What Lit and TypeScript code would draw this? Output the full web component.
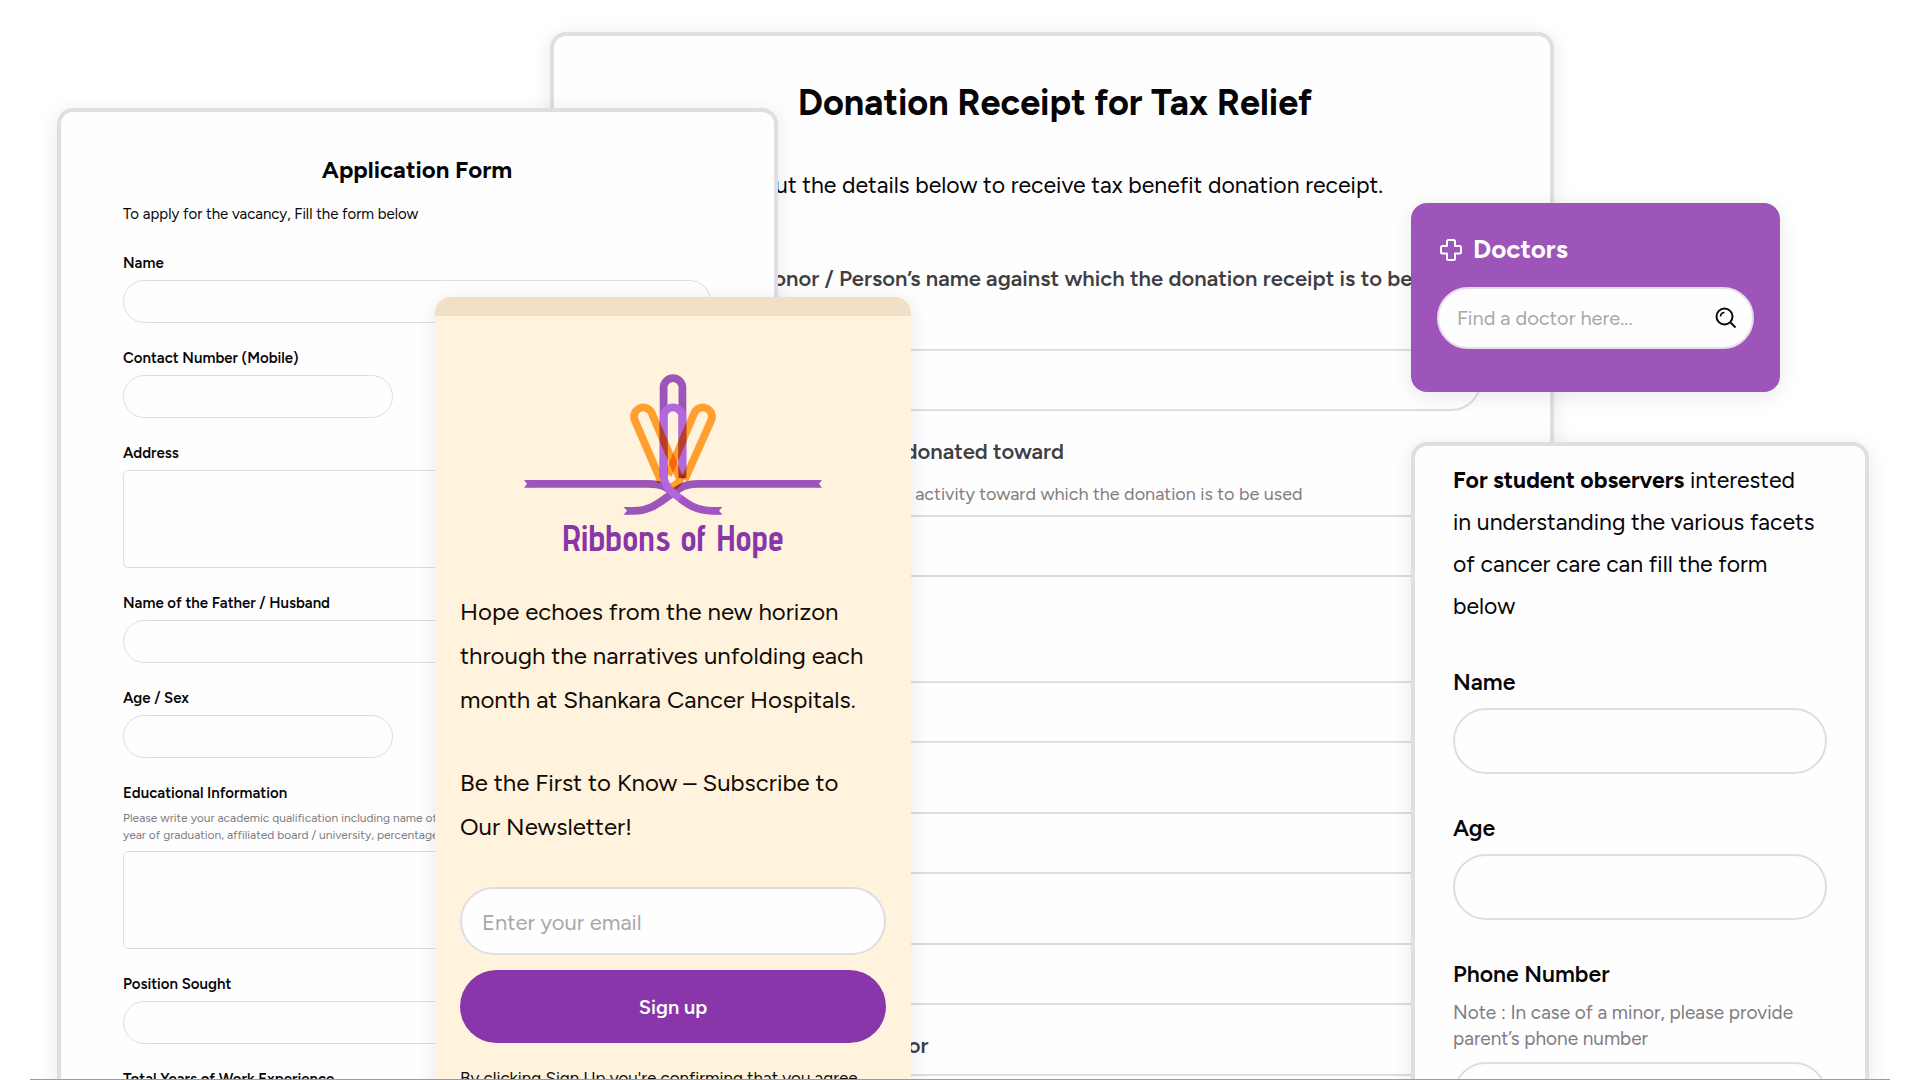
import { LitElement, html, css, svg, nothing } from "lit";
import type { TemplateResult } from "lit";
import { customElement, property } from "lit/decorators.js";
import { classMap } from "lit/directives/class-map.js";

interface Field {
  id: string;
  label: string;
  note?: TemplateResult | string;
  type?: "text" | "tel" | "email" | "number" | "area";
  short?: boolean;
}

const base = css`
  * {
    box-sizing: border-box;
    margin: 0;
  }
  :host {
    display: block;
    font-family: Figtree, Lato, "Open Sans", sans-serif;
    color: #060507;
  }
  input,
  textarea,
  button {
    font: inherit;
    color: inherit;
    display: block;
    width: 100%;
    outline: none;
  }
  input::placeholder {
    color: #a9a7ab;
    opacity: 1;
  }
`;

/** A column of labelled inputs; each form sets its own metrics through custom properties. */
@customElement("field-list")
class FieldList extends LitElement {
  @property({ attribute: false }) fields: Field[] = [];

  static styles = [
    base,
    css`
      .list {
        display: flex;
        flex-direction: column;
        gap: var(--field-gap);
      }
      .field {
        display: flex;
        flex-direction: column;
      }
      .label {
        font-size: var(--label-size);
        line-height: var(--label-line);
        font-weight: 600;
        color: var(--label-color, #060507);
      }
      .note {
        font-size: var(--note-size);
        line-height: var(--note-line);
        padding: var(--note-top) 0 var(--inner-gap);
        color: #7f7c82;
      }
      .control {
        height: var(--control-height);
        border: var(--control-border) solid #dfdce2;
        border-radius: 40px;
        background: #fefefe;
        padding: 0 16px;
      }
      .area {
        height: 98px;
        border-radius: 5px;
        resize: none;
      }
      .short {
        width: 46%;
      }
      .label + .control {
        margin-top: var(--inner-gap);
      }
    `,
  ];

  render() {
    return html`<div class="list">
      ${this.fields.map((f) => {
        const cls = classMap({ control: true, area: f.type === "area", short: !!f.short });
        return html`<div class="field">
          <label class="label" for=${f.id}>${f.label}</label>
          ${f.note ? html`<p class="note" id="${f.id}-note">${f.note}</p>` : nothing}
          ${f.type === "area"
            ? html`<textarea class=${cls} id=${f.id}></textarea>`
            : html`<input class=${cls} id=${f.id} type=${f.type ?? "text"} />`}
        </div>`;
      })}
    </div>`;
  }
}

@customElement("donation-form")
class DonationForm extends LitElement {
  static styles = [
    base,
    css`
      .form {
        padding: 43px 68px 40px 74px;
        --field-gap: 20px;
        --label-size: 22px;
        --label-line: 42px;
        --label-color: #403e42;
        --note-size: 18px;
        --note-line: 28px;
        --note-top: 7px;
        --inner-gap: 7px;
        --control-height: 62px;
        --control-border: 2px;
      }
      .title {
        font-size: 36px;
        line-height: 48px;
        font-weight: 700;
        text-align: center;
      }
      .intro {
        font-size: 23px;
        line-height: 36px;
        padding: 40px 0 55px;
      }
    `,
  ];
  fields: Field[] = [
    {
      id: "donor",
      label: "Name of the Donor / Person’s name against which the donation receipt is to be generated",
    },
    {
      id: "cause",
      label: "Causes the amount is to be donated toward",
      note: "Please write the title of project and activity toward which the donation is to be used",
    },
    { id: "pan", label: "PAN Number", note: "Needed for tax relief" },
    { id: "phone", label: "Phone Number", type: "tel" },
    { id: "email", label: "Email Address", type: "email" },
    { id: "address", label: "Contact Address of the Donor" },
    { id: "city", label: "City" },
  ];
  render() {
    return html`<form class="form">
      <h2 class="title">Donation Receipt for Tax Relief</h2>
      <p class="intro">Please do fill out the details below to receive tax benefit donation receipt.</p>
      <field-list .fields=${this.fields}></field-list>
    </form>`;
  }
}

@customElement("application-form")
class ApplicationForm extends LitElement {
  static styles = [
    base,
    css`
      .form {
        padding: 42px 63px 40px 62px;
        --field-gap: 25px;
        --label-size: 15px;
        --label-line: 20px;
        --note-size: 12px;
        --note-line: 17px;
        --note-top: 7px;
        --inner-gap: 7px;
        --control-height: 43px;
        --control-border: 1px;
      }
      .title {
        font-size: 24px;
        line-height: 32px;
        font-weight: 700;
        text-align: center;
      }
      .intro {
        font-size: 15px;
        line-height: 20px;
        padding: 18px 0 29px;
      }
    `,
  ];
  fields: Field[] = [
    { id: "name", label: "Name" },
    { id: "contact", label: "Contact Number (Mobile)", type: "tel", short: true },
    { id: "address", label: "Address", type: "area" },
    { id: "father", label: "Name of the Father / Husband" },
    { id: "age", label: "Age / Sex", short: true },
    {
      id: "education",
      label: "Educational Information",
      type: "area",
      note: html`Please write your academic qualification including name of the institution,<br />year of
        graduation, affiliated board / university, percentage`,
    },
    { id: "position", label: "Position Sought" },
    { id: "experience", label: "Total Years of Work Experience", type: "number" },
  ];
  render() {
    return html`<form class="form">
      <h2 class="title">Application Form</h2>
      <p class="intro">To apply for the vacancy, Fill the form below</p>
      <field-list .fields=${this.fields}></field-list>
    </form>`;
  }
}

@customElement("observer-form")
class ObserverForm extends LitElement {
  static styles = [
    base,
    css`
      .form {
        padding: 13px 38px 40px;
        --field-gap: 38px;
        --label-size: 23px;
        --label-line: 32px;
        --note-size: 19px;
        --note-line: 26px;
        --note-top: 10px;
        --inner-gap: 10px;
        --control-height: 66px;
        --control-border: 2px;
      }
      .intro {
        font-size: 23px;
        line-height: 42px;
        padding-bottom: 39px;
      }
    `,
  ];
  fields: Field[] = [
    { id: "name", label: "Name" },
    { id: "age", label: "Age", type: "number" },
    {
      id: "phone",
      label: "Phone Number",
      type: "tel",
      note: "Note : In case of a minor, please provide parent’s phone number",
    },
  ];
  render() {
    return html`<form class="form">
      <p class="intro">
        <strong>For student observers</strong> interested<br />in understanding the various facets of cancer
        care can fill the form below
      </p>
      <field-list .fields=${this.fields}></field-list>
    </form>`;
  }
}

/** Ribbon tied into a crown of loops; the orange loops tint what they cross. */
const ribbonLogo = svg`
  <g fill="none" stroke-width="7.8">
    <g stroke="#9c56ba">
      <path d="M103 136.8H108C128 137.5 138 126 149 119C157 113 162 109.8 174 109.8H294" />
      <path d="M4 109.8H124C138 109.8 144 114 149 119" />
      <path d="M158.4 104V13.6A9.4 9.4 0 0 0 139.6 13.6V104" />
    </g>
    <path stroke="#b467dc" d="M158.4 100V42.8A9.4 9.4 0 0 0 139.6 42.8V98" />
    <path class="tint" stroke="#ff9f30" d="M137.4 108L110.6 45.8A9.2 9.2 0 0 1 127.5 38.6L156 105Q154 111 147 113" />
    <path class="tint" stroke="#ff9f30" d="M160.6 106L187.4 45.8A9.2 9.2 0 0 0 170.5 38.6L144 101" />
    <path stroke="#b467dc" d="M139.6 84V100C139.6 109 143 114 149 119L157 125" />
    <path stroke="#a354c0" d="M156 124.3C165 131 173 136.8 188 136.8H195" />
  </g>
  <g fill="#9c56ba">
    <path d="M0 105.900H5V113.700H0L3 109.800Z" />
    <path d="M298 105.900H293V113.700H298L295 109.800Z" />
    <path d="M99.500 132.900H105V140.700H99.500L103 136.800Z" />
    <path fill="#a354c0" d="M198.500 132.900H193V140.700H198.500L195 136.800Z" />
  </g>
`;

@customElement("newsletter-card")
class NewsletterCard extends LitElement {
  static styles = [
    base,
    css`
      .strip {
        height: 19px;
        background: #f2e0c6;
      }
      .body {
        padding: 58px 25px 40px;
        display: flex;
        flex-direction: column;
      }
      .brand {
        align-self: center;
        display: flex;
        flex-direction: column;
        align-items: center;
        padding-bottom: 28px;
      }
      .mark {
        width: 298px;
        height: 140px;
        overflow: visible;
        isolation: isolate;
      }
      .tint {
        mix-blend-mode: multiply;
      }
      .wordmark {
        font-family: "Advent Pro", "Roboto Condensed", Figtree, sans-serif;
        font-size: 36px;
        line-height: 48px;
        font-weight: 700;
        color: #8836a9;
      }
      .copy {
        font-size: 24px;
        line-height: 44px;
        color: #110b04;
        display: flex;
        flex-direction: column;
        gap: 39px;
        padding-bottom: 38px;
      }
      .email {
        height: 68px;
        border: 2px solid #e0dce4;
        border-radius: 40px;
        background: #fefefe;
        padding: 2px 20px 0;
        font-size: 22px;
      }
      .submit {
        height: 73px;
        margin-top: 15px;
        border: 0;
        border-radius: 40px;
        background: #8836a9;
        color: #fff;
        font-size: 20px;
        font-weight: 600;
      }
      .terms {
        padding-top: 21px;
        font-size: 17px;
        line-height: 28px;
        color: #110b04;
      }
    `,
  ];
  render() {
    return html`<div class="strip"></div>
      <form class="body">
        <div class="brand">
          <svg class="mark" viewBox="0 0 298 140" aria-hidden="true">${ribbonLogo}</svg>
          <span class="wordmark">Ribbons of Hope</span>
        </div>
        <div class="copy">
          <p>
            Hope echoes from the new horizon through the narratives unfolding each month at Shankara Cancer
            Hospitals.
          </p>
          <p>Be the First to Know – Subscribe to<br />Our Newsletter!</p>
        </div>
        <input class="email" type="email" placeholder="Enter your email" aria-label="Email" />
        <button class="submit" type="button">Sign up</button>
        <p class="terms">
          By clicking Sign Up you're confirming that you agree<br />with our Terms and Conditions.
        </p>
      </form>`;
  }
}

@customElement("doctor-search")
class DoctorSearch extends LitElement {
  static styles = [
    base,
    css`
      .search {
        padding: 30px 26px 43px;
        display: flex;
        flex-direction: column;
        gap: 22px;
      }
      .title {
        display: flex;
        align-items: center;
        gap: 10px;
        color: #fff;
        font-size: 26px;
        line-height: 32px;
        font-weight: 700;
      }
      .cross {
        width: 26px;
        height: 26px;
      }
      .box {
        display: flex;
        align-items: center;
        height: 62px;
        padding: 0 14px 0 18px;
        border: 2px solid #e6dcec;
        border-radius: 40px;
        background: #fefefe;
      }
      .query {
        border: 0;
        padding: 0;
        background: none;
        font-size: 20px;
        min-width: 0;
        flex: 1;
      }
      .go {
        width: 24px;
        height: 24px;
        padding: 0;
        border: 0;
        background: none;
      }
      .glass {
        display: block;
        width: 24px;
        height: 24px;
      }
    `,
  ];
  render() {
    return html`<form class="search" role="search">
      <h2 class="title">
        <svg class="cross" viewBox="0 0 26 26" fill="none" stroke="#fff" stroke-width="2" stroke-linejoin="round">
          <path
            d="M11.5 4H16.5Q18 4 18 5.5V10H22.5Q24 10 24 11.5V16Q24 17.5 22.5 17.5H18V22.5Q18 24 16.5 24H11.5Q10 24 10 22.5V17.5H5.5Q4 17.5 4 16V11.5Q4 10 5.5 10H10V5.5Q10 4 11.5 4Z"
          />
        </svg>
        Doctors
      </h2>
      <div class="box">
        <input class="query" type="text" placeholder="Find a doctor here..." aria-label="Find a doctor" />
        <button class="go" type="button" aria-label="Search">
          <svg class="glass" viewBox="0 0 24 24" fill="none" stroke="#0a0a0a" stroke-width="2">
            <circle cx="10.5" cy="10.5" r="8" />
            <path d="M16.5 16.5L21.5 21.5" />
            <path d="M6.5 10.5A4 4 0 0 1 10.5 6.5" stroke-width="1.6" />
          </svg>
        </button>
      </div>
    </form>`;
  }
}

@customElement("app-root")
class AppRoot extends LitElement {
  static styles = [
    base,
    css`
      :host {
        position: relative;
        height: 100vh;
        overflow: hidden;
        background: #fff;
      }
      /* Column lines are the edges of the overlapping cards. */
      .stage {
        display: grid;
        grid-template-columns:
          minmax(0, 57fr) minmax(0, 378fr) minmax(0, 115fr) minmax(0, 228fr) minmax(0, 133fr)
          minmax(0, 500fr) minmax(0, 143fr) minmax(0, 226fr) minmax(0, 89fr) minmax(0, 51fr);
      }
      .card {
        grid-row: 1;
        border-radius: 16px;
        box-shadow: 0 4px 20px rgba(40, 20, 60, 0.1);
      }
      .sheet {
        border: 4px solid #e1dee3;
        background: #fefefe;
      }
      .donation {
        grid-column: 4 / 8;
        margin-top: 32px;
      }
      .application {
        grid-column: 2 / 5;
        margin-top: 108px;
      }
      .newsletter {
        grid-column: 3 / 6;
        margin-top: 297px;
        background: #fff3de;
        overflow: hidden;
      }
      .doctors {
        grid-column: 7 / 9;
        margin-top: 203px;
        align-self: start;
        background: #9d55b9;
      }
      .observer {
        grid-column: 7 / 10;
        margin-top: 442px;
      }
      .rule {
        position: absolute;
        left: 30px;
        right: 30px;
        bottom: 0;
        height: 1px;
        background: #9d9b9e;
      }
    `,
  ];
  render() {
    return html`<main class="stage">
        <donation-form class="card sheet donation"></donation-form>
        <application-form class="card sheet application"></application-form>
        <newsletter-card class="card newsletter"></newsletter-card>
        <observer-form class="card sheet observer"></observer-form>
        <doctor-search class="card doctors"></doctor-search>
      </main>
      <div class="rule"></div>`;
  }
}
